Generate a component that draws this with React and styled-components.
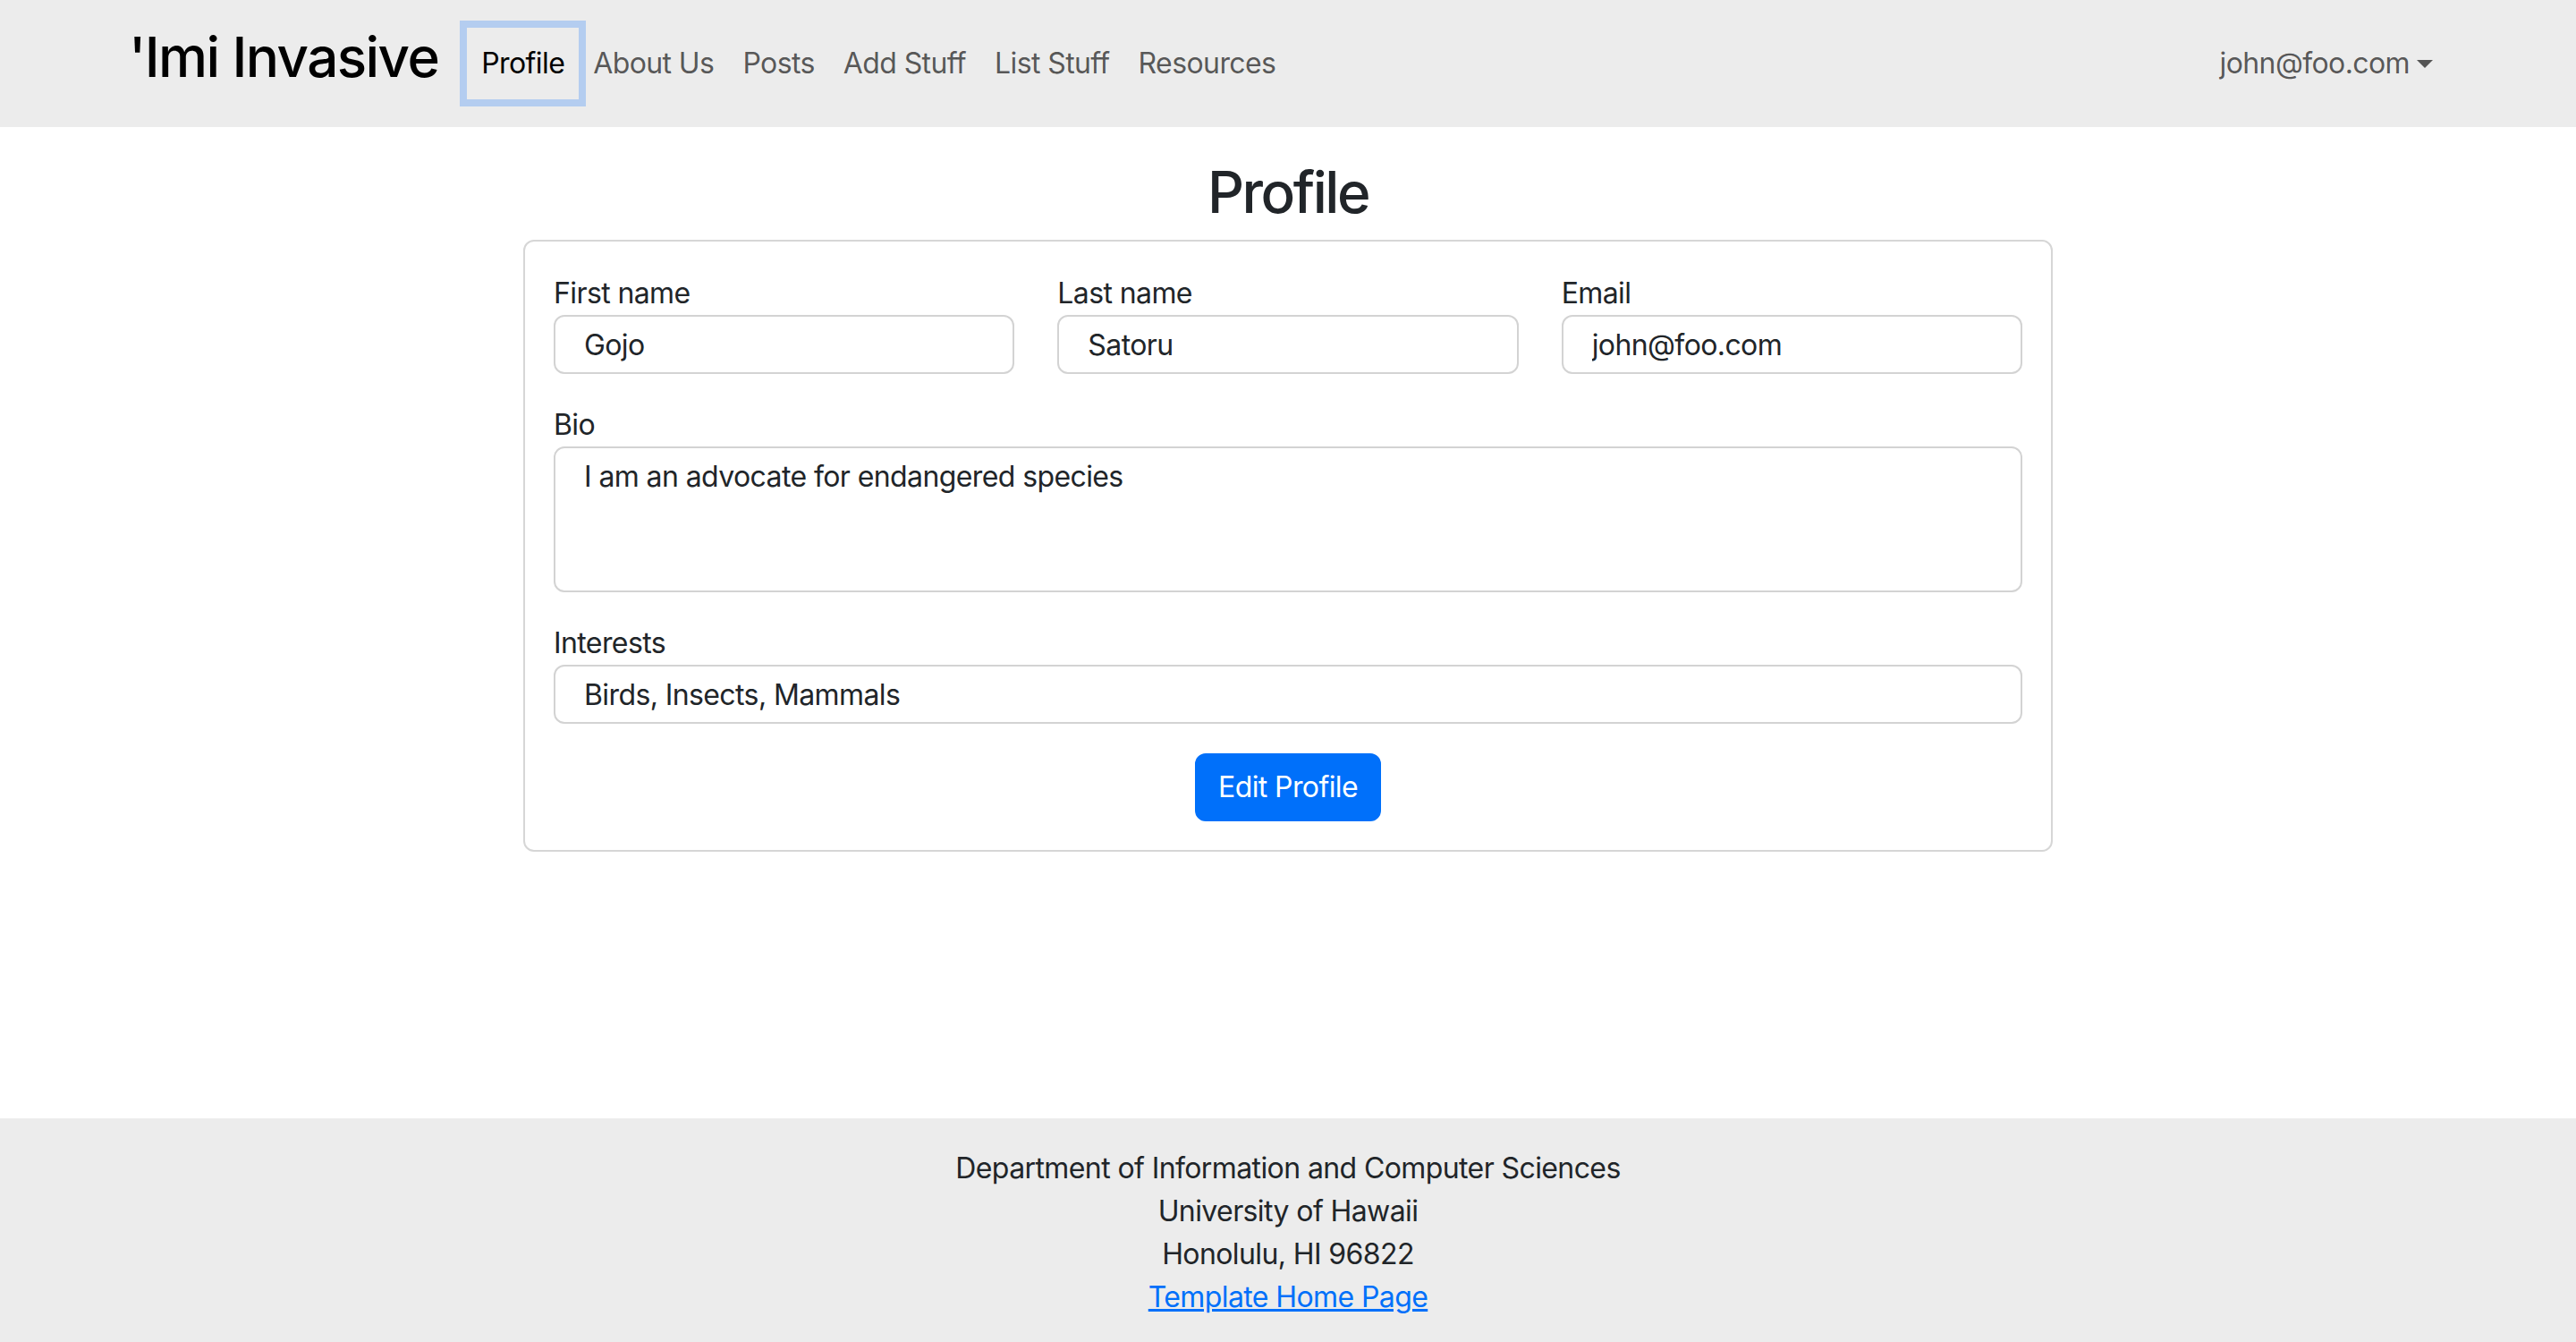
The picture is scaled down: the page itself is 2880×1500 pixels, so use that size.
import React from 'react';
import styled, { createGlobalStyle } from 'styled-components';

const GlobalStyle = createGlobalStyle`
  html, body {
    margin: 0;
    padding: 0;
    overflow: hidden;
  }
  body {
    font-family: Inter, "Noto Sans", "Liberation Sans", sans-serif;
    color: #212529;
    background: #ffffff;
    letter-spacing: -0.6px;
  }
  * {
    box-sizing: border-box;
  }
`;

const Page = styled.div`
  min-height: 100vh;
  display: flex;
  flex-direction: column;
`;

const NavBar = styled.nav`
  height: 142px;
  background: #ececec;
`;

const NavContainer = styled.div`
  width: 2592px;
  height: 100%;
  margin: 0 auto;
  display: flex;
  align-items: center;
`;

const Brand = styled.a`
  font-size: 62px;
  font-weight: 500;
  line-height: 1.5;
  color: #000;
  text-decoration: none;
  margin-right: 32px;
  padding-bottom: 16px;
  letter-spacing: -1.6px;
`;

const NavLinks = styled.ul`
  display: flex;
  list-style: none;
  margin: 0;
  padding: 0;
`;

const NavLink = styled.a`
  display: block;
  padding: 16px;
  font-size: 32px;
  line-height: 48px;
  text-decoration: none;
  color: ${(p) => (p.$active ? '#000' : 'rgba(0, 0, 0, 0.65)')};
  box-shadow: ${(p) => (p.$active ? '0 0 0 8px rgba(13, 110, 253, 0.25)' : 'none')};
`;

const UserMenu = styled.a`
  margin-left: auto;
  display: flex;
  align-items: center;
  padding: 16px;
  font-size: 32px;
  line-height: 48px;
  color: rgba(0, 0, 0, 0.65);
  text-decoration: none;

  &::after {
    content: '';
    margin-left: 8px;
    border-top: 9px solid #555;
    border-left: 9px solid transparent;
    border-right: 9px solid transparent;
  }
`;

const Main = styled.main`
  flex: 1;
  padding-top: 34px;
`;

const Title = styled.h2`
  margin: 0 0 15px;
  font-size: 64px;
  font-weight: 500;
  line-height: 77px;
  letter-spacing: -2.5px;
  text-align: center;
  color: #212529;
`;

const Card = styled.form`
  width: 1710px;
  margin: 0 auto;
  padding: 34px 32px 32px;
  border: 2px solid #d6d6d6;
  border-radius: 12px;
  display: flex;
  flex-direction: column;
`;

const Row = styled.div`
  display: grid;
  grid-template-columns: repeat(3, 1fr);
  gap: 48px;
`;

const Field = styled.div`
  margin-bottom: 33px;
`;

const Label = styled.label`
  display: block;
  font-size: 32px;
  line-height: 48px;
  color: #212529;
`;

const Input = styled.input`
  display: block;
  width: 100%;
  height: 66px;
  padding: 7px 32px;
  font-family: inherit;
  font-size: 32px;
  line-height: 48px;
  letter-spacing: inherit;
  color: #212529;
  background: #fff;
  border: 2px solid #d3d3d3;
  border-radius: 12px;
  outline: none;
`;

const TextArea = styled.textarea`
  display: block;
  width: 100%;
  height: 163px;
  padding: 8px 32px;
  font-family: inherit;
  font-size: 32px;
  line-height: 48px;
  letter-spacing: inherit;
  color: #212529;
  background: #fff;
  border: 2px solid #d3d3d3;
  border-radius: 12px;
  outline: none;
  resize: none;
`;

const Button = styled.button`
  align-self: center;
  padding: 12px 24px;
  font-family: inherit;
  font-size: 32px;
  line-height: 48px;
  letter-spacing: inherit;
  color: #fff;
  background: #0070fa;
  border: 2px solid #0070fa;
  border-radius: 12px;
  cursor: pointer;
`;

const Footer = styled.footer`
  background: #ececec;
  padding: 32px 0 26px;
  text-align: center;
  font-size: 32px;
  line-height: 48px;
  color: #212529;

  a {
    color: #0070fa;
  }
`;

const links = ['Profile', 'About Us', 'Posts', 'Add Stuff', 'List Stuff', 'Resources'];

const App = () => {
  return (
    <Page>
      <GlobalStyle />
      <NavBar>
        <NavContainer>
          <Brand href="#">'Imi Invasive</Brand>
          <NavLinks>
            {links.map((l, i) => (
              <li key={l}>
                <NavLink href="#" $active={i === 0}>{l}</NavLink>
              </li>
            ))}
          </NavLinks>
          <UserMenu href="#">john@foo.com</UserMenu>
        </NavContainer>
      </NavBar>

      <Main>
        <Title>Profile</Title>
        <Card onSubmit={(e) => e.preventDefault()}>
          <Row>
            <Field>
              <Label>First name</Label>
              <Input defaultValue="Gojo" />
            </Field>
            <Field>
              <Label>Last name</Label>
              <Input defaultValue="Satoru" />
            </Field>
            <Field>
              <Label>Email</Label>
              <Input defaultValue="john@foo.com" />
            </Field>
          </Row>
          <Field>
            <Label>Bio</Label>
            <TextArea defaultValue="I am an advocate for endangered species" />
          </Field>
          <Field>
            <Label>Interests</Label>
            <Input defaultValue="Birds, Insects, Mammals" />
          </Field>
          <Button type="button">Edit Profile</Button>
        </Card>
      </Main>

      <Footer>
        <div>Department of Information and Computer Sciences</div>
        <div>University of Hawaii</div>
        <div>Honolulu, HI 96822</div>
        <a href="#">Template Home Page</a>
      </Footer>
    </Page>
  );
};

export default App;
